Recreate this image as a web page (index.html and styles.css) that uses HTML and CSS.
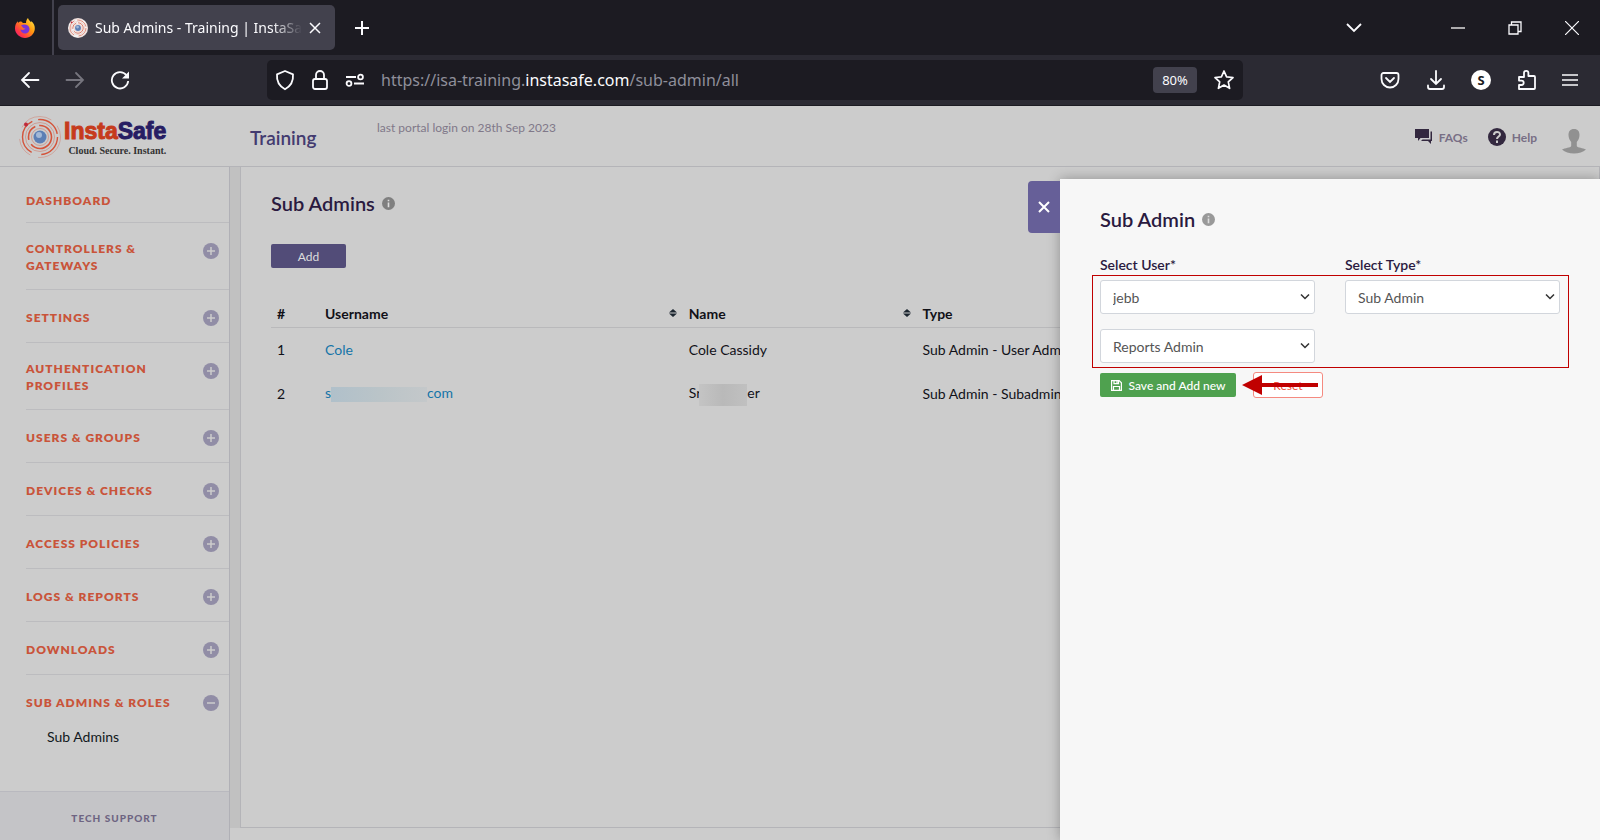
FILE: index.html
```html
<!DOCTYPE html>
<html lang="en">
<head>
    <meta charset="UTF-8">
    <meta name="viewport" content="width=device-width, initial-scale=1.0">
    <title>Sub Admins - Training | InstaSafe</title>
    <link rel="stylesheet" href="styles.css">
</head>
<body>

    <!-- shared icons -->
    <svg class="sprite" aria-hidden="true">
        <symbol id="plus" viewBox="0 0 16 16"><circle cx="8" cy="8" r="8" fill="#918da6"/><path d="M8 4v8M4 8h8" stroke="#ccc" stroke-width="1.5"/></symbol>
        <symbol id="minus" viewBox="0 0 16 16"><circle cx="8" cy="8" r="8" fill="#918da6"/><path d="M4 8h8" stroke="#ccc" stroke-width="1.5"/></symbol>
        <symbol id="info" viewBox="0 0 12 12"><circle cx="6" cy="6" r="6" fill="currentColor"/><path d="M6 5v4.500M6 2.500v1.500" stroke="#ddd" stroke-width="1.500" fill="none"/></symbol>
        <symbol id="sort" viewBox="0 0 8 8"><path d="M4 0l4 3.5H0zM4 8l4-3.5H0z" fill="#1c2630"/></symbol>
        <symbol id="rings" viewBox="0 0 44 44">
            <g fill="none" stroke="#d4533a">
                <circle cx="22" cy="22" r="20.5" stroke-width=".8" stroke-dasharray="34 8 20 12" opacity=".4"/>
                <circle cx="22" cy="22" r="17.5" stroke-width="1.4" stroke-dasharray="26 10 38 6"/>
                <circle cx="22" cy="22" r="14.5" stroke-width=".8" opacity=".5"/>
                <circle cx="22" cy="22" r="11.5" stroke-width="1.6" stroke-dasharray="28 5 16 4"/>
                <circle cx="22" cy="22" r="8.5" stroke-width=".8" opacity=".5"/>
            </g>
            <circle cx="22" cy="22" r="6.500" fill="#5c7fb5"/>
            <circle cx="21" cy="20" r="3" fill="#a3b8d6"/>
            <circle cx="8" cy="9.500" r="2" fill="#c02a3c"/>
        </symbol>
    </svg>

    <div class="tabs">
        <div class="pinned">
            <svg width="20" height="20" viewBox="0 0 20 20">
                <defs><linearGradient id="fox" x1="1" y1="0" x2="0" y2="1"><stop offset="0" stop-color="#fff44f"/><stop offset=".4" stop-color="#ff980e"/><stop offset=".75" stop-color="#ff3647"/><stop offset="1" stop-color="#e31587"/></linearGradient></defs>
                <path d="M13 0c.3 2 2 2.600 3 4.300.3-.5.2-1 .1-1.300C19 5 20 8 19.800 11c-.3 5-4.800 9-9.800 9S0 15.700 0 10.500C0 7.500 1 5 2.800 3.300L3 5c.9-.9 2-1.400 3.300-1.400L8 5h3c0-2 .7-4 2-5z" fill="url(#fox)"/>
                <path d="M6 7.500c3-2 8-1 8.500 3 .3 3-2 5-4.500 5s-4.500-1.800-4.500-4c2 1 4 .3 5-1-1.500 0-2.500-.5-3-1.500z" fill="#7a35d8"/>
            </svg>
        </div>
        <div class="tab">
            <span class="favicon"><svg width="20" height="20"><use href="#rings"/></svg></span>
            <span class="tab-title">Sub Admins - Training | InstaSafe</span>
            <button aria-label="Close tab"><svg width="12" height="12" viewBox="0 0 12 12" fill="none" stroke="#fbfbfe" stroke-width="1.5"><path d="M1 1l10 10M11 1L1 11"/></svg></button>
        </div>
        <button class="new-tab" aria-label="New tab"><svg width="16" height="16" viewBox="0 0 16 16" stroke="#fbfbfe" stroke-width="2"><path d="M8 1v14M1 8h14"/></svg></button>
        <div class="window-buttons">
            <button aria-label="List all tabs"><svg width="16" height="16" viewBox="0 0 16 16" fill="none" stroke="#fbfbfe" stroke-width="1.800"><path d="M1 4l7 7 7-7"/></svg></button>
            <button class="minimize" aria-label="Minimize"><svg width="14" height="14" viewBox="0 0 14 14" stroke="#ddd" stroke-width="1.500"><path d="M0 7h14"/></svg></button>
            <button aria-label="Restore"><svg width="14" height="14" viewBox="0 0 14 14" fill="none" stroke="#fbfbfe" stroke-width="1.300"><path d="M1 4h9v9H1zM3.500 4V1H13v9.500h-3"/></svg></button>
            <button aria-label="Close"><svg width="14" height="14" viewBox="0 0 14 14" fill="none" stroke="#fbfbfe" stroke-width="1.200"><path d="M0 0l14 14M14 0L0 14"/></svg></button>
        </div>
    </div>

    <div class="toolbar">
        <div class="nav-buttons">
            <button aria-label="Back"><svg width="20" height="20" viewBox="0 0 20 20" fill="none" stroke="#fbfbfe" stroke-width="1.800" stroke-linecap="round"><path d="M18.500 10H2M9 3l-7 7 7 7"/></svg></button>
            <button aria-label="Forward" disabled><svg width="20" height="20" viewBox="0 0 20 20" fill="none" stroke="#76757e" stroke-width="1.800" stroke-linecap="round"><path d="M1.500 10H18M11 3l7 7-7 7"/></svg></button>
            <button aria-label="Reload"><svg width="20" height="20" viewBox="0 0 20 20" fill="none" stroke="#fbfbfe" stroke-width="1.800"><path d="M16.500 5.200A8.200 8.200 0 1 0 18.200 11"/><path d="M19 1.500v7h-7z" fill="#fbfbfe" stroke="none"/></svg></button>
        </div>
        <div class="url-bar">
            <svg width="20" height="22" viewBox="0 0 20 22" fill="none" stroke="#fbfbfe" stroke-width="1.800" stroke-linejoin="round"><path d="M10 2l8 3.300c.5 6-2 11.700-8 15-6-3.300-8.500-9-8-15z"/></svg>
            <svg width="18" height="22" viewBox="0 0 18 22" fill="none" stroke="#fbfbfe" stroke-width="1.800"><rect x="2" y="10" width="14" height="10" rx="2"/><path d="M5 10V6a4 4 0 0 1 8 0v4"/></svg>
            <svg width="20" height="14" viewBox="0 0 20 14" fill="none" stroke="#fbfbfe" stroke-width="1.800"><path d="M1 4h10M9 10.500h10"/><circle cx="15.500" cy="4" r="2.400"/><circle cx="4" cy="10.500" r="2.400"/></svg>
            <span class="url">https://isa-training.<b>instasafe.com</b>/sub-admin/all</span>
            <button class="zoom">80%</button>
            <button aria-label="Bookmark"><svg width="22" height="22" viewBox="0 0 22 22" fill="none" stroke="#fbfbfe" stroke-width="1.700" stroke-linejoin="round"><path d="M11 2l2.600 5.800 6.400.7-4.700 4.300 1.300 6.500L11 16l-5.600 3.300 1.300-6.500L2 8.500l6.400-.7z"/></svg></button>
        </div>
        <div class="extensions">
            <button aria-label="Pocket"><svg width="20" height="20" viewBox="0 0 20 20" fill="none" stroke="#fbfbfe" stroke-width="1.800" stroke-linecap="round"><path d="M3.500 3h13a2 2 0 0 1 2 2v4a8.500 8.500 0 0 1-17 0V5a2 2 0 0 1 2-2zM6 8l4 4 4-4"/></svg></button>
            <button aria-label="Downloads"><svg width="20" height="20" viewBox="0 0 20 20" fill="none" stroke="#fbfbfe" stroke-width="1.800" stroke-linecap="round"><path d="M10 1v13M5 9l5 5 5-5M2 15.500V17q0 2 2 2h12q2 0 2-2v-1.500"/></svg></button>
            <button class="account" aria-label="Account">S</button>
            <button aria-label="Extensions"><svg width="20" height="22" viewBox="0 0 20 22" fill="none" stroke="#fbfbfe" stroke-width="1.800" stroke-linejoin="round"><path d="M2 8h5V4a2.200 2.200 0 0 1 4.400 0v3H17a1 1 0 0 1 1 1v11a1 1 0 0 1-1 1H2v-4h2.500a2.200 2.200 0 0 0 0-4.400H2z"/></svg></button>
            <button aria-label="Menu"><svg width="16" height="14" viewBox="0 0 16 14" stroke="#fbfbfe" stroke-width="1.500"><path d="M0 2h16M0 7h16M0 12h16"/></svg></button>
        </div>
    </div>

    <div class="page">
        <header class="header">
            <a class="logo" href="#">
                <svg width="44" height="44"><use href="#rings"/></svg>
                <span class="logo-text">
                    <span class="logo-name">Insta<span>Safe</span></span>
                    <span class="logo-tag">Cloud. Secure. Instant.</span>
                </span>
            </a>
            <span class="company">Training</span>
            <span class="last-login">last portal login on 28th Sep 2023</span>
            <a class="header-link" href="#"><svg width="18" height="16" viewBox="0 0 18 16" fill="#33283f"><path d="M0 0h14v9H5.500L3 12V9H0zM15.500 2.500H17V12h-1v3l-3-3H6l1.500-1.500h8z"/></svg>FAQs</a>
            <a class="header-link" href="#"><svg width="18" height="18" viewBox="0 0 18 18"><circle cx="9" cy="9" r="9" fill="#33283f"/><path d="M6 7c0-4 6-4 6-.5 0 2-3 2-3 4.500M9 12.500V15" fill="none" stroke="#ccc" stroke-width="2"/></svg>Help</a>
            <a class="avatar" href="#" aria-label="Profile"><svg width="24" height="26" viewBox="0 0 24 26" fill="#919191"><path d="M12 1c4 0 5.500 2.600 5.500 6 0 3-1.200 5-2.700 7v4c1 2 6 1.800 9.200 3.500-3 2.800-7 4-12 4s-9-1.200-12-4C3.200 19.800 8.200 20 9.200 18v-4C7.700 12 6.500 10 6.500 7c0-3.400 1.500-6 5.500-6z"/></svg></a>
        </header>

        <div class="columns">
            <aside class="sidebar">
                <nav>
                    <a class="item first" href="#">Dashboard</a>
                    <a class="item" href="#"><span>Controllers &amp; Gateways</span><svg width="16" height="16"><use href="#plus"/></svg></a>
                    <a class="item" href="#"><span>Settings</span><svg width="16" height="16"><use href="#plus"/></svg></a>
                    <a class="item" href="#"><span>Authentication Profiles</span><svg width="16" height="16"><use href="#plus"/></svg></a>
                    <a class="item" href="#"><span>Users &amp; Groups</span><svg width="16" height="16"><use href="#plus"/></svg></a>
                    <a class="item" href="#"><span>Devices &amp; Checks</span><svg width="16" height="16"><use href="#plus"/></svg></a>
                    <a class="item" href="#"><span>Access Policies</span><svg width="16" height="16"><use href="#plus"/></svg></a>
                    <a class="item" href="#"><span>Logs &amp; Reports</span><svg width="16" height="16"><use href="#plus"/></svg></a>
                    <a class="item" href="#"><span>Downloads</span><svg width="16" height="16"><use href="#plus"/></svg></a>
                    <a class="item open" href="#"><span>Sub Admins &amp; Roles</span><svg width="16" height="16"><use href="#minus"/></svg></a>
                    <a class="sub-item" href="#">Sub Admins</a>
                </nav>
                <a class="support" href="#">Tech Support</a>
            </aside>

            <main class="main">
                <section class="panel">
                    <h1>Sub Admins <svg width="13" height="13"><use href="#info"/></svg></h1>
                    <button class="add">Add</button>
                    <table>
                        <thead>
                            <tr>
                                <th class="col-num">#</th>
                                <th class="col-user"><span class="sortable">Username <svg width="8" height="8"><use href="#sort"/></svg></span></th>
                                <th class="col-name"><span class="sortable">Name <svg width="8" height="8"><use href="#sort"/></svg></span></th>
                                <th>Type</th>
                            </tr>
                        </thead>
                        <tbody>
                            <tr>
                                <td>1</td>
                                <td><a href="#">Cole</a></td>
                                <td>Cole Cassidy</td>
                                <td>Sub Admin - User Admin</td>
                            </tr>
                            <tr>
                                <td>2</td>
                                <td><a href="#">s<span class="masked"></span>com</a></td>
                                <td>Sr<span class="masked grey"></span>er</td>
                                <td>Sub Admin - Subadmin</td>
                            </tr>
                        </tbody>
                    </table>
                </section>
            </main>
        </div>

        <div class="drawer">
            <button class="drawer-close" aria-label="Close"><svg width="12" height="12" viewBox="0 0 12 12" fill="none" stroke="#fff" stroke-width="2"><path d="M1 1l10 10M11 1L1 11"/></svg></button>
            <h2>Sub Admin <svg width="13" height="13"><use href="#info"/></svg></h2>
            <form>
                <div class="fields">
                    <div class="field">
                        <label for="user">Select User*</label>
                        <select id="user"><option>jebb</option></select>
                    </div>
                    <div class="field">
                        <label for="type">Select Type*</label>
                        <select id="type"><option>Sub Admin</option></select>
                    </div>
                    <div class="field">
                        <select id="role" aria-label="Role"><option>Reports Admin</option></select>
                    </div>
                    <div class="highlight"></div>
                </div>
                <div class="actions">
                    <button type="button" class="save"><svg width="11" height="11" viewBox="0 0 11 11" fill="none" stroke="#fff" stroke-width="1.200"><path d="M.6.6h7.600l2.200 2.200v7.600H.6zM3 .6v3h4.500v-3M2.500 10.400V6.500h6v3.900M6 1v2"/></svg>Save and Add new</button>
                    <button type="reset" class="reset">Reset</button>
                    <svg class="arrow" width="76" height="20" viewBox="0 0 76 20" fill="#c00000"><path d="M0 10L20 0v8h56v4H20v8z"/></svg>
                </div>
            </form>
        </div>
    </div>

</body>
</html>
```
FILE: styles.css
```css
* {
    box-sizing: border-box;
}
body {
    margin: 0;
    min-height: 100vh;
    display: flex;
    flex-direction: column;
    font-family: Lato, sans-serif;
    font-size: 14px;
    color: #111118;
    background-color: #ccc;
}
a {
    color: #1474a8;
    text-decoration: none;
}
button {
    font-family: inherit;
    cursor: pointer;
    padding: 0;
    border: none;
    background: none;
}
svg {
    display: block;
    flex-shrink: 0;
}
.sprite {
    position: absolute;
    width: 0;
    height: 0;
}

/* browser window */
.tabs {
    display: flex;
    align-items: center;
    height: 55px;
    background-color: #1c1b22;
    font-family: "Noto Sans", sans-serif;
}
.pinned {
    display: flex;
    align-items: center;
    width: 54px;
    height: 55px;
    padding-left: 15px;
    border-right: 2px solid #42414d;
}
.tab {
    display: flex;
    align-items: center;
    gap: 7px;
    width: 277px;
    height: 45px;
    margin-left: 4px;
    padding: 0 14px 0 10px;
    border-radius: 5px;
    background-color: #42414d;
    color: #fbfbfe;
    font-size: 14px;
}
.favicon {
    background-color: #f4f4f4;
    border-radius: 50%;
}
.tab-title {
    flex: 1;
    overflow: hidden;
    white-space: nowrap;
    -webkit-mask-image: linear-gradient(to left, transparent, #000 30px);
    mask-image: linear-gradient(to left, transparent, #000 30px);
}
.new-tab {
    margin-left: 19px;
}
.window-buttons {
    display: flex;
    align-items: center;
    gap: 43px;
    margin-left: auto;
    padding-right: 21px;
}
.minimize {
    margin-left: 46px;
}
.toolbar {
    display: flex;
    align-items: center;
    height: 51px;
    background-color: #2b2a33;
    border-bottom: 1px solid #1c1b22;
    font-family: "Noto Sans", sans-serif;
}
.nav-buttons {
    display: flex;
    gap: 25px;
    width: 267px;
    padding-left: 20px;
}
.url-bar {
    display: flex;
    align-items: center;
    gap: 16px;
    flex: 1;
    height: 40px;
    padding: 0 8px;
    border-radius: 5px;
    background-color: #1c1b22;
}
.url {
    flex: 1;
    font-size: 16px;
    color: #8f8f9a;
}
.url b {
    font-weight: 400;
    color: #fbfbfe;
}
.zoom {
    width: 44px;
    height: 26px;
    border-radius: 4px;
    background-color: #42414d;
    color: #fbfbfe;
    font-size: 13px;
}
.extensions {
    display: flex;
    align-items: center;
    justify-content: space-between;
    width: 357px;
    padding: 0 22px 0 137px;
}
.account {
    width: 20px;
    height: 20px;
    border-radius: 50%;
    background-color: #fff;
    color: #1c1b22;
    font-size: 13px;
    font-weight: 700;
    line-height: 20px;
}

/* portal */
.page {
    position: relative;
    flex: 1;
    display: flex;
    flex-direction: column;
    overflow: hidden;
}
.header {
    display: flex;
    align-items: center;
    height: 61px;
    padding: 2px 14px 0 0;
    border-bottom: 1px solid #b4b4b8;
}
.logo {
    display: flex;
    align-items: center;
    gap: 2px;
    width: 250px;
    padding-left: 18px;
}
.logo-text {
    display: flex;
    flex-direction: column;
    align-items: flex-end;
}
.logo-name {
    font-family: "Liberation Sans Narrow", "Liberation Sans", sans-serif;
    font-size: 23px;
    font-weight: 700;
    line-height: 27px;
    color: #c63b1c;
    -webkit-text-stroke: 1px currentColor;
}
.logo-name span {
    color: #271d63;
}
.logo-tag {
    font-family: "Liberation Serif", serif;
    font-size: 10px;
    font-weight: 700;
    line-height: 11px;
    color: #333;
}
.company {
    width: 127px;
    font-size: 19px;
    font-weight: 600;
    color: #433b70;
}
.last-login {
    align-self: flex-start;
    margin-right: auto;
    padding-top: 12px;
    font-size: 12px;
    color: #807889;
}
.header-link {
    display: flex;
    align-items: center;
    gap: 6px;
    margin-right: 20px;
    font-size: 12px;
    font-weight: 700;
    color: #786f85;
}
.avatar {
    margin: 7px 0 0 5px;
}
.columns {
    flex: 1;
    display: flex;
}
.sidebar {
    display: flex;
    flex-direction: column;
    width: 230px;
    border-right: 1px solid #b0b0b6;
}
nav {
    flex: 1;
    display: flex;
    flex-direction: column;
    padding: 1px 0 0 26px;
}
.item {
    display: flex;
    justify-content: space-between;
    min-height: 53px;
    padding: 17px 10px 15px 0;
    border-bottom: 1px solid #bcbcbf;
    color: #c9543a;
    font-size: 12px;
    font-weight: 800;
    line-height: 17px;
    letter-spacing: 1px;
    text-transform: uppercase;
}
.item span {
    align-self: center;
    max-width: 150px;
}
.item svg {
    margin-top: 3px;
}
.item.first {
    padding: 24px 0 13px;
}
.item.open {
    border-bottom: none;
}
.sub-item {
    padding: 0 21px;
    line-height: 18px;
    color: #111820;
}
.support {
    height: 49px;
    border-top: 1px solid #b9b9bf;
    background-color: #c4c4c7;
    color: #6e6482;
    font-size: 10px;
    font-weight: 900;
    line-height: 53px;
    letter-spacing: 1px;
    text-align: center;
    text-transform: uppercase;
}
.main {
    flex: 1;
    display: flex;
    margin-bottom: 12px;
    padding-left: 10px;
    background-color: #c1c1c1;
}
.panel {
    flex: 1;
    padding: 23px 29px 0 30px;
    border: 1px solid #b4b4b8;
    border-top: none;
    background-color: #ccc;
}
h1,
h2 {
    display: flex;
    align-items: center;
    gap: 7px;
    margin: 0;
    font-size: 20px;
    font-weight: 600;
    line-height: 26px;
    color: #2a1a40;
}
h1 svg,
h2 svg {
    color: #7f7f7f;
}
.add {
    display: block;
    width: 75px;
    height: 24px;
    margin-top: 28px;
    border-radius: 2px;
    background-color: #524c78;
    color: #ddd;
    font-size: 12px;
}
table {
    width: 100%;
    margin-top: 32px;
    table-layout: fixed;
    border-collapse: collapse;
}
th {
    height: 27px;
    padding: 0 6px;
    border-bottom: 1px solid #b9b9bb;
    font-weight: 700;
    text-align: left;
}
td {
    height: 44px;
    padding: 0 6px;
}
.col-num {
    width: 48px;
}
.col-user {
    width: 28%;
}
.col-name {
    width: 18%;
}
.sortable {
    display: flex;
    align-items: center;
    justify-content: space-between;
}
.masked {
    display: inline-block;
    width: 96px;
    height: 15px;
    vertical-align: middle;
    background-image: linear-gradient(to right, #b0c0ca, #bac4c8 50%, #c4c8ca);
}
.masked.grey {
    width: 48px;
    height: 22px;
    margin: -4px 0 -4px -2px;
    background-image: linear-gradient(to right, #c4c4c4, #b9b9b9 50%, #c0c0c0);
}

/* edit form, slides in over the table */
.drawer {
    position: absolute;
    top: 73px;
    right: 0;
    bottom: 0;
    width: 540px;
    max-width: 100%;
    padding: 27px 40px;
    background-color: #f7f7f7;
    box-shadow: 0 0 12px rgba(0, 0, 0, 0.3);
}
.drawer-close {
    position: absolute;
    top: 2px;
    right: 100%;
    display: flex;
    align-items: center;
    justify-content: center;
    width: 32px;
    height: 52px;
    border-radius: 4px 0 0 4px;
    background-color: #665f98;
}
h2 svg {
    color: #999;
}
.fields {
    position: relative;
    display: grid;
    grid-template-columns: 1fr 1fr;
    gap: 15px 30px;
    margin-top: 23px;
}
label {
    display: block;
    margin-bottom: 5px;
    font-weight: 600;
    line-height: 20px;
    color: #2a1a40;
}
select {
    display: block;
    width: 100%;
    height: 34px;
    padding: 0 12px;
    border: 1px solid #d2d6dc;
    border-radius: 3px;
    appearance: none;
    background: #fff url("data:image/svg+xml,%3Csvg xmlns='http://www.w3.org/2000/svg' width='10' height='6' fill='none' stroke='%23333' stroke-width='1.5'%3E%3Cpath d='M1 .5l4 4 4-4'/%3E%3C/svg%3E") no-repeat right 4px center;
    font-family: inherit;
    font-size: 14px;
    color: #555;
}
.highlight {
    position: absolute;
    top: 20px;
    right: -9px;
    bottom: -5px;
    left: -8px;
    border: 1px solid #c00000;
    pointer-events: none;
}
.actions {
    position: relative;
    display: flex;
    align-items: center;
    gap: 17px;
    margin-top: 9px;
}
.save {
    display: flex;
    align-items: center;
    justify-content: center;
    gap: 7px;
    width: 136px;
    height: 24px;
    border-radius: 2px;
    background-color: #4fa14f;
    color: #fff;
    font-size: 12px;
    font-weight: 500;
}
.reset {
    width: 70px;
    height: 26px;
    border: 1px solid #f58a80;
    border-radius: 3px;
    background-color: #fff;
    color: #f0503c;
    font-size: 12px;
}
.arrow {
    position: absolute;
    top: 3px;
    left: 142px;
}
```
